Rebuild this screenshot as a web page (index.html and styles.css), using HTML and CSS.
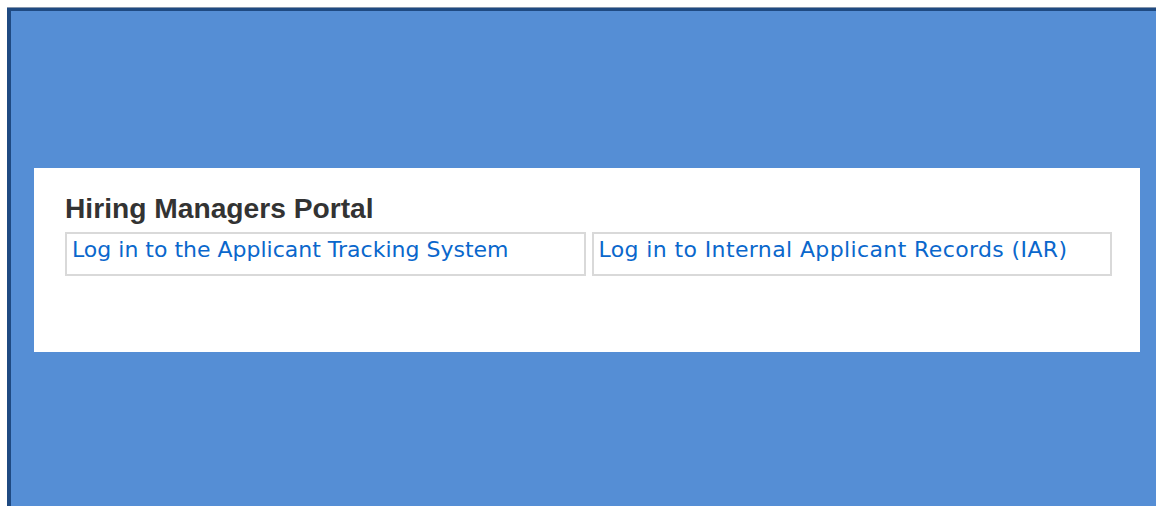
FILE: index.html
```html
<!DOCTYPE html>
<html lang="en">
<head>
<meta charset="utf-8">
<title>Hiring Managers Portal</title>
<link rel="stylesheet" href="styles.css">
</head>
<body>
  <div class="frame">
    <section class="portal">
      <h1 class="portal-title">Hiring Managers Portal</h1>
      <div class="portal-links">
        <div class="portal-cell"><a class="portal-link" href="#">Log in to the Applicant Tracking System</a></div>
        <div class="portal-cell"><a class="portal-link portal-link--iar" href="#">Log in to Internal Applicant Records (IAR)</a></div>
      </div>
    </section>
  </div>
</body>
</html>
```

FILE: styles.css
```css
html, body {
  margin: 0;
  padding: 0;
  background: #ffffff;
  height: 100%;
  overflow: hidden;
}

body {
  padding: 8px 0 0 7px;
  box-sizing: border-box;
}

/* blue page area with its dark top/left edge; it runs past the right edge of the window */
.frame {
  height: 100%;
  box-sizing: border-box;
  margin-right: -20px;
  background: #558ed5;
  border-top: 3px solid #1f4a82;
  border-left: 4px solid #1f4a82;
  box-shadow: 0 -1px 0 #8596ad;
  padding: 157px 36px 0 23px;
}

.portal {
  background: #ffffff;
  height: 184px;
  box-sizing: border-box;
  padding: 24px 28px 0 31px;
}

.portal-title {
  margin: 0 0 8px;
  font-family: "Liberation Sans", Arial, sans-serif;
  font-weight: bold;
  font-size: 28.2px;
  line-height: 32px;
  color: #333333;
}

.portal-links {
  display: flex;
  gap: 6px;
}

.portal-cell {
  flex: 1;
  height: 44px;
  box-sizing: border-box;
  border: 2px solid #d9d9d9;
  padding: 3px 6px 0 5px;
}

.portal-link {
  font-family: "DejaVu Sans", Verdana, sans-serif;
  font-size: 22px;
  line-height: 26px;
  color: #0a67cc;
  text-decoration: none;
}

.portal-link--iar {
  letter-spacing: 0.38px;
}
```
